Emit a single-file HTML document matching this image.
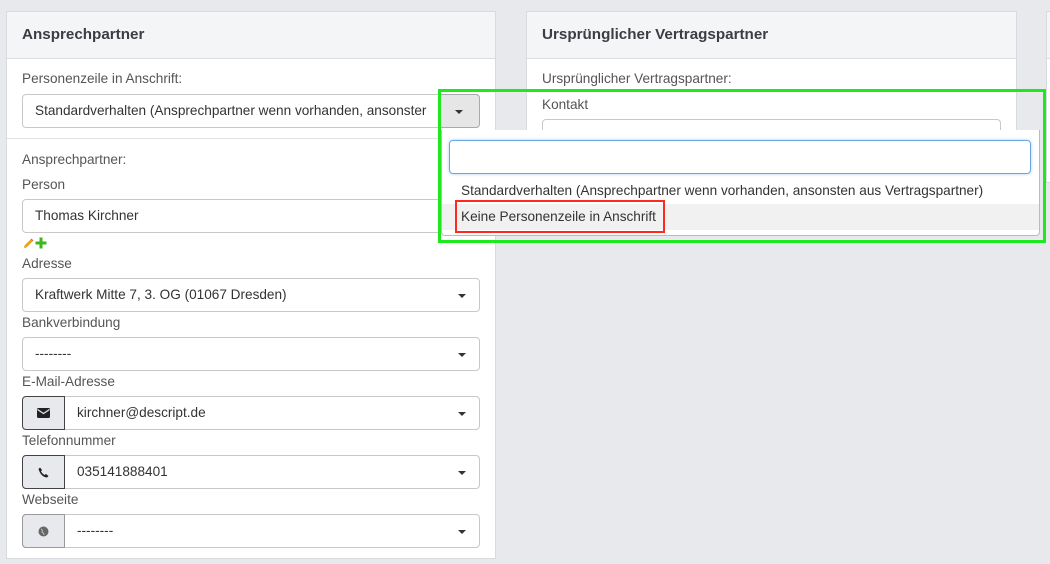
<!DOCTYPE html>
<html><head><meta charset="utf-8"><style>
*{box-sizing:border-box}
body{margin:0;width:1050px;height:564px;background:#e8e9ec;font-family:"Liberation Sans",sans-serif;font-size:13.6px;color:#333;position:relative;overflow:hidden}
.abs{position:absolute}
.panel{position:absolute;background:#fff;border:1px solid #d9dadd}
.hdr{position:absolute;left:0;right:0;top:0;height:47px;background:#f4f5f7;border-bottom:1px solid #dcdde0;font-weight:bold;font-size:15.2px;color:#3a3d42;padding:14px 0 0 15px}
.lbl{position:absolute;left:22px;color:#555;font-size:13.6px}
.sel{position:absolute;left:22px;width:458px;height:34px;border:1px solid #c8c8c8;border-radius:4px;background:#fff;padding:8px 12px;color:#333}
.car{position:absolute;right:13px;top:15px;width:0;height:0;border-left:4px solid transparent;border-right:4px solid transparent;border-top:4px solid #333}
.add{position:absolute;left:-1px;top:-1px;width:43px;height:34px;background:#e8e9ec;border:1px solid #444;border-radius:4px 0 0 4px}
</style></head><body>
<div class="panel" style="left:6px;top:11px;width:490px;height:548px">
<div class="hdr">Ansprechpartner</div>
<div class="abs" style="left:0;right:0;top:126px;border-top:1px solid #e2e2e2"></div>
</div>
<div class="lbl" style="top:71px">Personenzeile in Anschrift:</div>
<div class="sel" style="top:94px;width:458px">Standardverhalten (Ansprechpartner wenn vorhanden, ansonster
<div class="abs" style="right:-1px;top:-1px;width:42px;height:34px;background:#e6e6e6;border:1px solid #aaa;border-radius:4px"><div class="car" style="right:16px"></div></div></div>
<div class="lbl" style="top:152px">Ansprechpartner:</div>
<div class="lbl" style="top:177px">Person</div>
<div class="sel" style="top:199px">Thomas Kirchner</div>
<svg class="abs" style="left:23px;top:238px" width="11" height="11" viewBox="0 0 11 11"><path d="M1 10 L1.5 7.5 L7.5 1.5 L9.5 3.5 L3.5 9.5 Z" fill="#e8a317"/><path d="M7.5 1.5 L8.5 0.5 L10.5 2.5 L9.5 3.5Z" fill="#d97a2a"/></svg>
<svg class="abs" style="left:35px;top:237px" width="12" height="12" viewBox="0 0 12 12"><path d="M4.5 0.5h3v4h4v3h-4v4h-3v-4h-4v-3h4z" fill="#3cb71e"/></svg>
<div class="lbl" style="top:256px">Adresse</div>
<div class="sel" style="top:278px">Kraftwerk Mitte 7, 3. OG (01067 Dresden)<div class="car"></div></div>
<div class="lbl" style="top:315px">Bankverbindung</div>
<div class="sel" style="top:337px">--------<div class="car"></div></div>
<div class="lbl" style="top:374px">E-Mail-Adresse</div>
<div class="sel" style="top:396px;padding-left:54px"><div class="add"><svg class="abs" style="left:14px;top:11px" width="13" height="10" viewBox="0 0 13 10"><rect x="0" y="0" width="13" height="10" rx="1.5" fill="#222"/><path d="M0.5 1.5 L6.5 5.5 L12.5 1.5" stroke="#e8e9ec" stroke-width="1.2" fill="none"/></svg></div>kirchner@descript.de<div class="car"></div></div>
<div class="lbl" style="top:433px">Telefonnummer</div>
<div class="sel" style="top:455px;padding-left:54px"><div class="add"><svg class="abs" style="left:15px;top:11px" width="11" height="11" viewBox="0 0 11 11"><path d="M2 0.5 L4 3 L3 4.5 Q4.5 7 6.5 8 L8 7 L10.5 9 L9 10.5 Q3 10 0.5 2 Z" fill="#222"/></svg></div>035141888401<div class="car"></div></div>
<div class="lbl" style="top:492px">Webseite</div>
<div class="sel" style="top:514px;padding-left:54px"><div class="add" style="border-color:#999"><svg class="abs" style="left:15px;top:11px" width="11" height="11" viewBox="0 0 11 11"><circle cx="5.5" cy="5.5" r="5" fill="#666"/><path d="M3 3 Q5 4 4 6 Q6 7 6 9" stroke="#bbb" fill="none"/></svg></div>--------<div class="car"></div></div>

<div class="panel" style="left:526px;top:11px;width:491px;height:172px">
<div class="hdr">Ursprünglicher Vertragspartner</div>
</div>
<div class="lbl" style="left:542px;top:71px">Ursprünglicher Vertragspartner:</div>
<div class="lbl" style="left:542px;top:97px">Kontakt</div>
<div class="abs" style="left:542px;top:119px;width:459px;height:34px;border:1px solid #c8c8c8;border-radius:4px;background:#fff"></div>
<div class="panel" style="left:1046px;top:11px;width:20px;height:172px"><div class="hdr"></div></div>

<div class="abs" style="left:441px;top:130px;width:599px;height:106px;background:#fff;border:1px solid #bbb;border-top:none;border-radius:0 0 4px 4px"></div>
<div class="abs" style="left:449px;top:140px;width:582px;height:34px;border:1px solid #6aa6e4;border-radius:4px;box-shadow:0 0 3px #a8cdf2"></div>
<div class="abs" style="left:461px;top:183px;color:#333">Standardverhalten (Ansprechpartner wenn vorhanden, ansonsten aus Vertragspartner)</div>
<div class="abs" style="left:442px;top:204px;width:597px;height:26px;background:#f1f1f1"></div>
<div class="abs" style="left:461px;top:209px;color:#333">Keine Personenzeile in Anschrift</div>
<div class="abs" style="left:455px;top:200px;width:210px;height:33px;border:2px solid #ff2a1f"></div>
<div class="abs" style="left:438px;top:89px;width:608px;height:154px;border:3px solid #1ee81e"></div>
</body></html>
